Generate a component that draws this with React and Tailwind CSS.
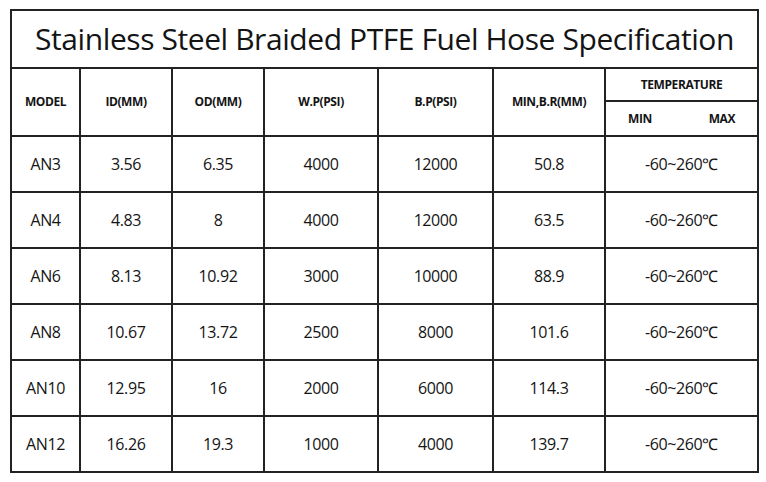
import React from "react";

const rows = [
  ["AN3", "3.56", "6.35", "4000", "12000", "50.8"],
  ["AN4", "4.83", "8", "4000", "12000", "63.5"],
  ["AN6", "8.13", "10.92", "3000", "10000", "88.9"],
  ["AN8", "10.67", "13.72", "2500", "8000", "101.6"],
  ["AN10", "12.95", "16", "2000", "6000", "114.3"],
  ["AN12", "16.26", "19.3", "1000", "4000", "139.7"],
];

const heads = ["MODEL", "ID(MM)", "OD(MM)", "W.P(PSI)", "B.P(PSI)", "MIN,B.R(MM)"];
const widths = ["w-[69px]", "w-[92px]", "w-[92px]", "w-[114px]", "w-[115px]", "w-[112px]", "w-[153px]"];

export default function App() {
  return (
    <div className="w-[766px] h-[482px] bg-white pt-[9px] pl-[10px] font-['Open_Sans',sans-serif] text-[#141414]">
      <table className="w-[747px] table-fixed border-collapse border-2 border-[#222]">
        <colgroup>
          {widths.map((w, i) => (
            <col key={i} className={w} />
          ))}
        </colgroup>
        <thead>
          <tr className="h-[58px]">
            <th colSpan={7} className="border-2 border-[#222] text-[30px] font-normal tracking-[-0.42px] leading-none">
              Stainless Steel Braided PTFE Fuel Hose Specification
            </th>
          </tr>
          <tr className="h-[33px]">
            {heads.map((h) => (
              <th key={h} rowSpan={2} className="border-2 border-[#222] text-[12px] font-bold tracking-[-0.4px]">
                {h}
              </th>
            ))}
            <th className="border-2 border-[#222] text-[12px] font-bold tracking-[-0.4px]">TEMPERATURE</th>
          </tr>
          <tr className="h-[35px]">
            <th className="border-2 border-[#222] text-[12px] font-bold tracking-[-0.4px]">
              <div className="flex justify-between px-[22px]">
                <span>MIN</span>
                <span>MAX</span>
              </div>
            </th>
          </tr>
        </thead>
        <tbody>
          {rows.map((r) => (
            <tr key={r[0]} className="h-[56px]">
              {r.map((c, i) => (
                <td key={i} className="border-2 border-[#222] text-center text-[16px] tracking-[-0.4px]">
                  {c}
                </td>
              ))}
              <td className="border-2 border-[#222] text-center text-[16px] tracking-[-0.4px]">-60~260℃</td>
            </tr>
          ))}
        </tbody>
      </table>
    </div>
  );
}
